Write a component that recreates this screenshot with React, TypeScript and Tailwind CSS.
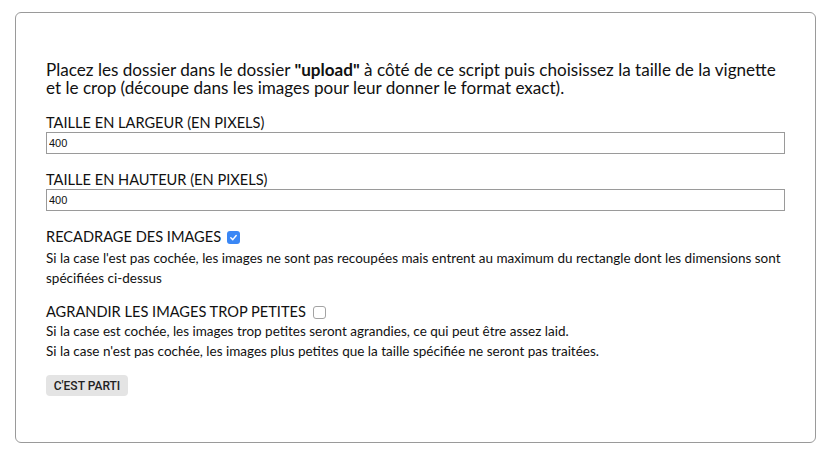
import React, { useState } from 'react';

const Check: React.FC<{ checked: boolean; onToggle: () => void }> = ({ checked, onToggle }) => (
  <button
    type="button"
    onClick={onToggle}
    className={
      checked
        ? 'ml-[6px] inline-flex h-[13px] w-[13px] items-center justify-center rounded-[3px] bg-[#3a87f5]'
        : 'ml-[7px] inline-flex h-[13px] w-[13px] items-center justify-center rounded-[3px] border border-[#a3a3a3] bg-white'
    }
  >
    {checked && (
      <svg width="9" height="9" viewBox="0 0 10 10">
        <path d="M2 5.3 L4.2 7.4 L8 2.8" fill="none" stroke="white" strokeWidth="1.6" strokeLinecap="round" strokeLinejoin="round" />
      </svg>
    )}
  </button>
);

export default function App() {
  const [width, setWidth] = useState('400');
  const [height, setHeight] = useState('400');
  const [crop, setCrop] = useState(true);
  const [enlarge, setEnlarge] = useState(false);

  return (
    <div className="min-h-[455px] bg-white pt-[12px] font-['Lato',sans-serif] text-[#111]">
      <div className="mx-[15px] h-[431px] rounded-[6px] border border-[#9a9a9a] px-[30px] pt-[48px]">
        <p className="text-[17.1px] leading-[18px]">
          Placez les dossier dans le dossier <b>"upload"</b> à côté de ce script puis choisissez la taille de la vignette
          <br />
          et le crop (découpe dans les images pour leur donner le format exact).
        </p>

        <label className="mt-[17px] block text-[14.6px] leading-[18px]">TAILLE EN LARGEUR (EN PIXELS)</label>
        <input
          value={width}
          onChange={e => setWidth(e.target.value)}
          className="block h-[22px] w-full border border-[#9a9a9a] px-[2px] font-['Liberation_Sans',sans-serif] text-[11px] outline-none"
        />

        <label className="mt-[17px] block text-[14.6px] leading-[18px]">TAILLE EN HAUTEUR (EN PIXELS)</label>
        <input
          value={height}
          onChange={e => setHeight(e.target.value)}
          className="block h-[22px] w-full border border-[#9a9a9a] px-[2px] font-['Liberation_Sans',sans-serif] text-[11px] outline-none"
        />

        <div className="mt-[17px] flex h-[18px] items-center text-[14.6px] leading-[18px]">
          <span>RECADRAGE DES IMAGES</span>
          <Check checked={crop} onToggle={() => setCrop(!crop)} />
        </div>
        <p className="mt-[2px] text-[13.5px] leading-[20px]">
          Si la case l'est pas cochée, les images ne sont pas recoupées mais entrent au maximum du rectangle dont les dimensions sont
          <br />
          spécifiées ci-dessus
        </p>

        <div className="mt-[15px] flex h-[18px] items-center text-[14.6px] leading-[18px]">
          <span>AGRANDIR LES IMAGES TROP PETITES</span>
          <Check checked={enlarge} onToggle={() => setEnlarge(!enlarge)} />
        </div>
        <p className="text-[13.5px] leading-[20px]">
          Si la case est cochée, les images trop petites seront agrandies, ce qui peut être assez laid.
          <br />
          Si la case n'est pas cochée, les images plus petites que la taille spécifiée ne seront pas traitées.
        </p>

        <button
          type="button"
          className="mt-[14px] h-[21px] w-[82px] rounded-[4px] bg-[#e4e4e4] font-['Roboto',sans-serif] text-[12px] font-medium text-[#222]"
        >
          C'EST PARTI
        </button>
      </div>
    </div>
  );
}
